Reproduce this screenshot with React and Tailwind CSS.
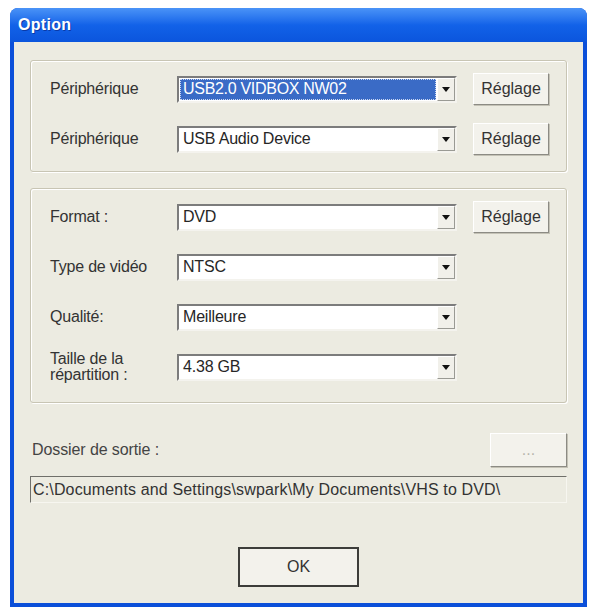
const font = { fontFamily: '"Liberation Sans", Arial, sans-serif' };

const GroupBox = ({ children, className = '' }) => (
  <div
    className={`rounded-[3px] border border-[#c8c5b4] shadow-[inset_1px_1px_0_#ffffff,1px_1px_0_#ffffff] ${className}`}
  >
    {children}
  </div>
);

const Arrow = () => (
  <svg width="8" height="5" viewBox="0 0 8 5">
    <path d="M0 0h8L4 5z" fill="#111" />
  </svg>
);

const Combo = ({ value, selected = false }) => (
  <div className="flex h-[27px] w-[280px] border-2 border-t-[#7c7c7c] border-l-[#7c7c7c] border-b-[#f4f3ee] border-r-[#f4f3ee] bg-white">
    <div className="flex min-w-0 flex-1 items-center p-[1px]">
      {selected ? (
        <div className="flex h-full w-full items-center whitespace-nowrap border border-dotted border-[#c9d6f0] bg-[#3a6bc6] pl-[2px] text-[16px] tracking-[-0.3px] text-white">
          USB2.0 VIDBOX NW02
        </div>
      ) : (
        <span className="whitespace-nowrap pl-[3px] text-[16px] tracking-[-0.2px] text-[#262626]">{value}</span>
      )}
    </div>
    <div className="flex w-[18px] items-center justify-center border border-t-white border-l-white border-b-[#9a9a94] border-r-[#9a9a94] bg-[#f1f0ea]">
      <Arrow />
    </div>
  </div>
);

const Button = ({ children, className = '', disabled = false }) => (
  <button
    className={`flex items-center justify-center border border-t-white border-l-white border-b-[#8c8b84] border-r-[#8c8b84] bg-[#f3f2ec] text-[16px] shadow-[1px_1px_0_#c4c2b6] ${
      disabled ? 'text-[#b8b6ac]' : 'text-[#333]'
    } ${className}`}
  >
    {children}
  </button>
);

const Row = ({ label, value, selected, withButton }) => (
  <div className="flex h-[34px] items-center">
    <div className="w-[127px] text-[16px] leading-[16px] tracking-[-0.2px] text-[#333]">{label}</div>
    <Combo value={value} selected={selected} />
    {withButton && <Button className="ml-[16px] h-[32px] w-[76px]">Réglage</Button>}
  </div>
);

const App = () => {
  return (
    <div className="min-h-[609px] bg-white pl-[10px] pt-[8px]" style={font}>
      <div className="flex h-[599px] w-[577px] flex-col overflow-hidden rounded-t-[8px] bg-[#0b4fd9]">
        <div className="flex h-[35px] items-center bg-gradient-to-b from-[#4a93f7] via-[#1262e8] to-[#0b55dd] pl-[8px]">
          <span className="text-[16px] font-bold tracking-[0.3px] text-white [text-shadow:1px_1px_0_#0a3aa8]">
            Option
          </span>
        </div>
        <div className="mx-[4px] mb-[4px] flex flex-1 flex-col bg-[#ecebe1] px-[16px] pb-[16px] pt-[18px]">
          <GroupBox className="flex flex-col gap-[16px] pb-[15px] pl-[19px] pt-[11px]">
            <Row label="Périphérique" selected withButton />
            <Row label="Périphérique" value="USB Audio Device" withButton />
          </GroupBox>

          <GroupBox className="mt-[16px] flex flex-col gap-[16px] pb-[18px] pl-[19px] pt-[11px]">
            <Row label="Format :" value="DVD" withButton />
            <Row label="Type de vidéo" value="NTSC" />
            <Row label="Qualité:" value="Meilleure" />
            <Row
              label={
                <>
                  Taille de la
                  <br />
                  répartition :
                </>
              }
              value="4.38 GB"
            />
          </GroupBox>

          <div className="mt-[30px] flex items-center justify-between">
            <span className="pl-[2px] text-[16px] tracking-[-0.1px] text-[#444]">Dossier de sortie :</span>
            <Button disabled className="h-[34px] w-[77px]">
              ...
            </Button>
          </div>

          <div className="mt-[9px] flex h-[27px] items-center whitespace-nowrap border border-t-[#6f6f6a] border-l-[#6f6f6a] border-b-[#f7f6f0] border-r-[#f7f6f0] bg-[#ecebe1] pl-[2px] text-[16px] tracking-[0.15px] text-[#333]">
            C:\Documents and Settings\swpark\My Documents\VHS to DVD\
          </div>

          <div className="mt-[44px] flex justify-center">
            <button className="flex h-[40px] w-[121px] items-center justify-center border-2 border-[#3d3d3a] bg-[#f3f2ec] text-[16px] text-[#333]">
              OK
            </button>
          </div>
        </div>
      </div>
    </div>
  );
};

export default App;
